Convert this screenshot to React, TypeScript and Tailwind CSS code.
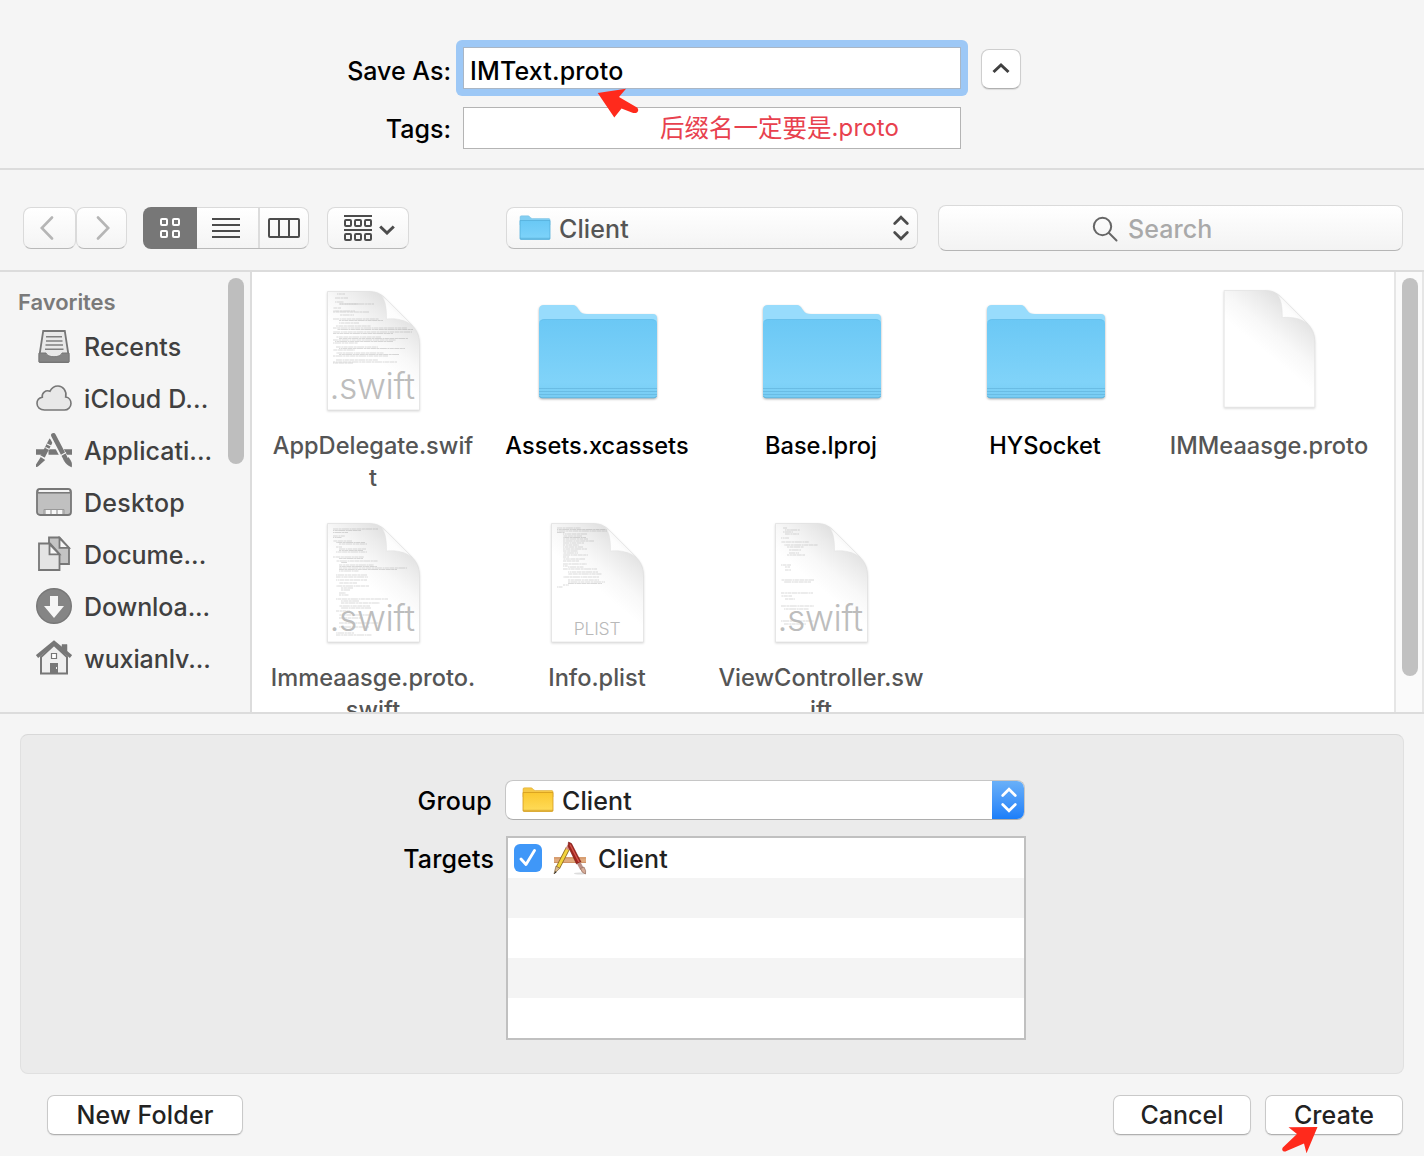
import type { ReactNode } from "react";

type Line = [number, number, number];

const appDelegateLines: Line[] = [
  [8, 7, 13], [10, 3, 8], [8, 11, 9], [12, 13, 19], [13, 13, 34], [6, 17, 8], [6, 20, 22], [6, 21, 36], [13, 24, 14],
  [6, 28, 46], [12, 29.5, 44], [12, 32, 20], [9, 35, 35], [6, 37, 74], [10, 38.5, 76], [6, 41, 79], [6, 42.5, 60],
  [9, 46, 45], [12, 47.5, 69], [6, 49, 63], [8, 50.5, 58], [6, 52, 25], [9, 56, 42], [12, 57.5, 66], [6, 59, 22],
  [9, 62, 48], [12, 63.5, 60], [6, 65, 55], [9, 69, 42], [6, 71, 64], [6, 72, 20],
];
const protoSwiftLines: Line[] = [
  [6, 6, 45], [6, 7.5, 28], [6, 9.5, 15], [6, 13, 12], [6, 14.5, 9], [6, 18, 19], [9, 19.5, 29], [12, 21, 28],
  [9, 24, 6], [12, 26, 27], [12, 27.5, 24], [9, 29, 31], [6, 34, 31], [12, 35.5, 24], [9, 38, 42], [14, 39.5, 6],
  [12, 42, 35], [12, 43.5, 38], [12, 45, 68], [12, 46.5, 58], [12, 48, 20], [9, 52, 31], [9, 54, 32], [9, 57, 31],
  [12, 60, 18], [9, 63, 33], [14, 65, 12], [14, 67, 9], [12, 70, 7], [12, 72, 10], [9, 76, 52], [14, 78, 18],
  [14, 80, 39], [12, 83, 31], [14, 85, 30], [9, 88, 14], [12, 92, 34], [12, 95, 24], [12, 100, 40], [12, 104, 30],
  [9, 110, 18], [9, 112, 36],
];
const plistLines: Line[] = [
  [6, 5, 24], [6, 6.5, 51], [6, 8, 50], [6, 9.5, 8], [12, 11, 24], [12, 13, 19], [12, 14.5, 23], [12, 16, 25],
  [12, 18, 31], [12, 20, 21], [12, 22, 16], [12, 24, 20], [12, 26, 24], [12, 28, 15], [12, 30, 15], [12, 32, 25],
  [12, 34, 6], [12, 36, 22], [12, 38, 16], [12, 41, 24], [12, 43, 5], [17, 44, 16], [12, 46, 34], [17, 49, 30],
  [17, 51, 34], [12, 54, 36], [17, 57, 31], [17, 59, 37], [17, 60.5, 34], [12, 62, 6], [6, 64, 6],
];
const viewLines: Line[] = [
  [8, 5, 4], [10, 7, 15], [8, 9, 10], [10, 11, 14], [6, 15, 8], [6, 19, 28], [9, 22, 34], [12, 24, 17], [14, 27, 12],
  [14, 30, 10], [12, 32, 18], [6, 42, 10], [10, 44, 5], [10, 47, 6], [6, 57, 33], [9, 59, 27], [6, 70, 32],
  [6, 73, 11], [10, 76, 10], [6, 83, 33], [9, 86, 25], [6, 98, 33], [9, 101, 22],
];

function Doc({ lines = [], id, tag, small }: { lines?: Line[]; id: string; tag?: string; small?: boolean }) {
  return (
    <div className="relative h-[120px] w-[93px]">
      <svg viewBox="0 0 93 120" className="h-[120px] w-[93px] overflow-visible" style={{ filter: "drop-shadow(0 1px 1px rgba(0,0,0,.16))" }}>
        <defs>
          <linearGradient id={`s-${id}`} gradientUnits="userSpaceOnUse" x1="72" y1="14" x2="36" y2="58">
            <stop offset="0" stopColor="#dedede" />
            <stop offset=".3" stopColor="#ebebeb" />
            <stop offset=".65" stopColor="#f8f8f8" />
            <stop offset="1" stopColor="#fff" />
          </linearGradient>
          <linearGradient id={`f-${id}`} x1="0" y1="1" x2=".7" y2=".3">
            <stop offset="0" stopColor="#fff" />
            <stop offset=".6" stopColor="#fdfdfd" />
            <stop offset="1" stopColor="#ececec" />
          </linearGradient>
        </defs>
        <path d="M.5.5H42C51 .5 55 4 60 9L83 32C89 38 92.500 43 92.500 54V119H.5Z" fill={`url(#s-${id})`} stroke="#e0e0e0" strokeWidth=".7" />
        <g stroke="#777" strokeWidth=".7" opacity=".38">
          {lines.map(([x, y, w], i) => (
            <line key={i} x1={x} x2={x + w} y1={y} y2={y} strokeDasharray="5 .5 3 .4 7 .6 2 .4 4 .5" strokeDashoffset={i * 3.7} />
          ))}
        </g>
        <path d="M54 4C59 10 59.500 18 59.500 28C70 27 78 29 85 34L60 9Z" fill={`url(#f-${id})`} stroke="#e0e0e0" strokeWidth=".5" />
      </svg>
      {tag && !small && (
        <span className="absolute top-[76px] left-[3px] text-[35.500px] leading-[40px] font-[350] tracking-[-0.4px] text-[#bdbdbd]">{tag}</span>
      )}
      {tag && small && (
        <span className="absolute top-[95px] left-0 w-full text-center text-[17.500px] leading-[22px] font-[350] tracking-[-0.2px] text-[#b9b9b9]">{tag}</span>
      )}
    </div>
  );
}

function BigFolder({ id }: { id: string }) {
  return (
    <svg viewBox="0 0 120 96" className="mt-[13px] ml-[2px] h-[96px] w-[120px] overflow-visible" style={{ filter: "drop-shadow(0 1px 1px rgba(0,0,0,.3))" }}>
      <defs>
        <linearGradient id={id} x1="0" y1="0" x2="0" y2="1">
          <stop offset="0" stopColor="#6bc8f5" />
          <stop offset=".8" stopColor="#80d3f9" />
          <stop offset="1" stopColor="#77ccf3" />
        </linearGradient>
      </defs>
      <path d="M1 6Q1 1 6 1H34C38 1 39 3 41 6C43 9 45 10 49 10H115Q119 10 119 14V60H1Z" fill="#98dcfc" />
      <path d="M1 20Q1 15.500 6 15.500H114Q119 15.500 119 20V91Q119 94 116 94H4Q1 94 1 91Z" fill={`url(#${id})`} />
      <path d="M2 17.500Q3 15.500 6 15.500H114Q117 15.500 118 17.500" fill="none" stroke="#62bce9" strokeWidth=".8" />
      <path d="M1 84.500H119M1 87.500H119M1 90.500H119" stroke="#68bae2" strokeWidth=".9" />
      <path d="M1.500 92Q2 93.800 4 93.800H116Q118 93.800 118.500 92" fill="none" stroke="#5db0d8" strokeWidth=".9" />
    </svg>
  );
}

function SmallFolder({ yellow }: { yellow?: boolean }) {
  const id = yellow ? "yf" : "bf";
  return (
    <svg viewBox="0 0 32 26" className="h-[26px] w-[32px] shrink-0">
      <defs>
        <linearGradient id={id} x1="0" y1="0" x2="0" y2="1">
          <stop offset="0" stopColor={yellow ? "#fbc82f" : "#69c8f5"} />
          <stop offset="1" stopColor={yellow ? "#ffdc5a" : "#7ed3fa"} />
        </linearGradient>
      </defs>
      <path d="M1 2Q1 .8 2.500 .8H9C11 .8 11 3.500 13.500 3.500H30Q31 3.500 31 5V10H1Z" fill={yellow ? "#f6c846" : "#82cef2"} stroke={yellow ? "#dba526" : "#7cc0e0"} strokeWidth=".5" />
      <path d="M1 5.500H31V23.500Q31 24.500 30 24.500H2Q1 24.500 1 23.500Z" fill={`url(#${id})`} stroke={yellow ? "#d39a1c" : "#54afda"} strokeWidth=".8" />
      <path d="M1 23.300H31" stroke={yellow ? "#c8921c" : "#4fa9d3"} strokeWidth=".7" />
    </svg>
  );
}

function UpDown({ className }: { className: string }) {
  return (
    <svg viewBox="0 0 16 26" className={className} fill="none" stroke="currentColor" strokeWidth="2.700" strokeLinecap="round" strokeLinejoin="miter">
      <path d="M1.700 8.500 8 2.200 14.300 8.500M1.700 17.500 8 23.800 14.300 17.500" />
    </svg>
  );
}

const icons: Record<string, ReactNode> = {
  recents: (
    <>
      <path d="M7.200 3H28.800L32.500 27V33.500Q32.500 34 32 34H4Q3.500 34 3.500 33.500V27Z" fill="#e9e9e9" stroke="#777" strokeWidth="1.800" />
      <path d="M10 8.700H26M10 13H26.500M9.500 17H27M9 21.200H27.500" stroke="#808080" strokeWidth="1.500" />
      <path d="M3 25H10C11 30 25 30 26 25H33V34H3Z" fill="#858585" stroke="#777" strokeWidth="1" />
    </>
  ),
  cloud: <path d="M8.500 30C4 30 1 27 1 23.500C1 20 3.500 17.800 6.300 17.300C5.500 13 9.500 9.600 14 11.200C15.500 8 18.500 6 22 6C27 6 31 11 29.700 17C33 17.500 35 20.500 35 23.500C35 27 32 30 28.500 30Z" fill="#e8e8e8" stroke="#777" strokeWidth="1.600" />,
  apps: (
    <g stroke="#777" strokeLinecap="butt">
      <path d="M0 20H8M12.500 20H24M28 20H36" strokeWidth="5.500" />
      <path d="M15.500 7.500 6.500 25" strokeWidth="4.600" />
      <path d="M17 4.500 29 27" stroke="#f5f5f5" strokeWidth="7" />
      <path d="M17.500 3.500 29 25.500" strokeWidth="4.800" strokeLinecap="round" />
      <path d="M11 12 15 14M9.500 15.500 13.500 17.500M4.500 24 9 26.500M24 24 30 20.500" stroke="#f5f5f5" strokeWidth="1.200" />
      <path d="M5 26 8 28 1.500 34Q0 35 .5 33Z" fill="#777" strokeWidth="1.500" />
      <path d="M27.500 27.500 32.500 25.500Q37 31 35.500 35Q30 33 27.500 27.500Z" fill="#777" strokeWidth=".5" />
    </g>
  ),
  desktop: (
    <>
      <rect x="1" y="5" width="34" height="26" rx="3" fill="#c0c0c0" stroke="#777" strokeWidth="1.800" />
      <path d="M2 8.800H34" stroke="#777" strokeWidth="1.500" />
      <path d="M3 7H33" stroke="#f4f4f4" strokeWidth="2" />
      <path d="M8 30V25.500H28V30" fill="none" stroke="#999" />
      <path d="M10 28H14M16 28H20M22 28H26" stroke="#f7f7f7" strokeWidth="4" />
    </>
  ),
  docs: (
    <g stroke="#777" strokeWidth="1.800">
      <path d="M13 1.500H23.500L33 12V28H13Z" fill="#c4c4c4" />
      <path d="M23.500 2V11.800H33Z" fill="#f7f7f7" />
      <path d="M3 7.500H14L23.500 18V34H3Z" fill="#e4e4e4" />
      <path d="M13.500 8V18.300H23.500Z" fill="#f7f7f7" />
    </g>
  ),
  down: (
    <>
      <circle cx="18" cy="18" r="17.300" fill="#858585" stroke="#777" strokeWidth="1.400" />
      <path d="M14 8H22V18H28L18 30 8 18H14Z" fill="#f6f6f6" />
    </>
  ),
  home: (
    <>
      <path d="M26 12V4.500H31V15" fill="#777" stroke="#777" strokeWidth=".5" />
      <path d="M5 17 18 5 31 17V33.500H5Z" fill="#efefef" stroke="#777" strokeWidth="2" />
      <path d="M1 16.500 18 2.500 35 16.500" fill="none" stroke="#777" strokeWidth="3.600" />
      <path d="M15.500 13.500H20.500V18.500H15.500Z" fill="#fff" stroke="#777" strokeWidth="1.200" />
      <path d="M14 23H22V34H14Z" fill="#777" />
      <path d="M20.500 27V29" stroke="#eee" strokeWidth="1" />
    </>
  ),
};

const favorites: [string, string, string][] = [
  ["recents", "Recents", "tracking-[0.12px]"],
  ["cloud", "iCloud D...", "tracking-[0.15px]"],
  ["apps", "Applicati...", "tracking-[0.05px]"],
  ["desktop", "Desktop", "tracking-[0.3px]"],
  ["docs", "Docume...", "tracking-[0px]"],
  ["down", "Downloa...", "tracking-[-0.1px]"],
  ["home", "wuxianlv...", "tracking-[-0.1px]"],
];

const files: { name: ReactNode; icon: ReactNode; active?: boolean }[] = [
  { name: <>AppDelegate.swif<br />t</>, icon: <Doc id="a" lines={appDelegateLines} tag=".swift" /> },
  { name: "Assets.xcassets", icon: <BigFolder id="fa" />, active: true },
  { name: "Base.lproj", icon: <BigFolder id="fb" />, active: true },
  { name: "HYSocket", icon: <BigFolder id="fc" />, active: true },
  { name: "IMMeaasge.proto", icon: <div className="-mt-px origin-top scale-[0.985] pl-px"><Doc id="b" /></div> },
  { name: <>Immeaasge.proto.<br />swift</>, icon: <Doc id="c" lines={protoSwiftLines} tag=".swift" /> },
  { name: "Info.plist", icon: <Doc id="d" lines={plistLines} tag="PLIST" small /> },
  { name: <>ViewController.sw<br />ift</>, icon: <Doc id="e" lines={viewLines} tag=".swift" /> },
];

const toolButton =
  "flex h-[42px] items-center border border-[#dadada] border-b-[#b9b9b9] bg-linear-to-b from-white to-[#f4f4f4]";
const pushButton =
  "flex h-[40px] items-center justify-center rounded-[7px] border border-[#c9c9c9] border-b-[#b0b0b0] bg-white text-[#222] shadow-[0_1px_1px_rgba(0,0,0,0.08)]";

export default function App() {
  return (
    <div className="relative flex h-[1156px] w-[1424px] flex-col overflow-hidden bg-[#f5f5f5] font-['Inter','Noto_Sans_CJK_SC',sans-serif] text-[25px] leading-[32px] font-[450] text-black">
      <header className="h-[170px] shrink-0 border-b-2 border-[#dcdcdc] pt-[47px]">
        <div className="flex h-[42px] items-center">
          <label className="w-[451px] pt-[6px] text-right">Save As:</label>
          <div className="ml-[5px] -my-[7px] rounded-[6px] bg-[#9dc8f6] p-[7px]">
            <div className="flex h-[42px] w-[498px] items-center border border-[#a9b6c5] bg-white pt-[6px] pl-[6px] tracking-[0.15px]">
              IMText.proto
            </div>
          </div>
          <button className="mt-[2px] ml-[13px] flex h-[40px] w-[40px] items-center justify-center rounded-[8px] border border-[#cecece] border-b-[#b0b0b0] bg-white shadow-[0_1px_1px_rgba(0,0,0,0.1)]">
            <svg viewBox="0 0 18 12" className="mb-[3px] h-[12px] w-[18px]" fill="none" stroke="#404040" strokeWidth="3">
              <path d="M1.500 10 9 3 16.500 10" />
            </svg>
          </button>
        </div>
        <div className="mt-[18px] flex h-[42px] items-center">
          <label className="w-[451px] pt-[2px] text-right">Tags:</label>
          <div className="ml-[12px] flex h-[42px] w-[498px] items-center border border-[#b4b4b4] bg-white pl-[196px] text-[24px] font-normal text-[#e8414e]">
            <span className="text-[24.500px]">后缀名一定要是</span>
            <span className="tracking-[0.15px]">.proto</span>
          </div>
        </div>
      </header>

      <div className="flex h-[102px] shrink-0 items-start border-b-2 border-[#dcdcdc] pt-[37px] pl-[23px] text-[#555]">
        <button className={`${toolButton} w-[53px] justify-center rounded-[8px]`}>
          <svg viewBox="0 0 14 24" className="mr-[5px] h-[24px] w-[14px]" fill="none" stroke="#b5b5b5" strokeWidth="2.600" strokeLinecap="round">
            <path d="M12 1.500 1.800 12 12 22.500" />
          </svg>
        </button>
        <button className={`${toolButton} w-[51px] justify-center rounded-[8px]`}>
          <svg viewBox="0 0 14 24" className="ml-[2px] h-[24px] w-[14px]" fill="none" stroke="#b5b5b5" strokeWidth="2.600" strokeLinecap="round">
            <path d="M2 1.500 12.200 12 2 22.500" />
          </svg>
        </button>
        <div className="ml-[16px] flex h-[42px] w-[166px]">
          <div className="flex h-[42px] w-[54px] shrink-0 items-center justify-center rounded-l-[8px] bg-[#777]">
            <svg viewBox="0 0 20 20" className="h-[20px] w-[20px]" fill="none" stroke="#fff" strokeWidth="2">
              <rect x="1" y="1" width="6" height="6" rx="1" />
              <rect x="13" y="1" width="6" height="6" rx="1" />
              <rect x="1" y="13" width="6" height="6" rx="1" />
              <rect x="13" y="13" width="6" height="6" rx="1" />
            </svg>
          </div>
          <div className={`${toolButton} w-[112px] rounded-r-[8px] border-l-0`}>
            <div className="flex h-full w-[63px] shrink-0 items-center border-r-2 border-[#dcdcdc] pl-[15px]">
              <svg viewBox="0 0 28 20" className="h-[20px] w-[28px]" stroke="#4c4c4c" strokeWidth="2">
                <path d="M0 1H28M0 7H28M0 13H28M0 19H28" />
              </svg>
            </div>
            <div className="flex h-full flex-1 items-center justify-center">
              <svg viewBox="0 0 32 20" className="h-[20px] w-[32px]" fill="none" stroke="#4c4c4c" strokeWidth="2">
                <rect x="1" y="1" width="30" height="18" rx="1" />
                <path d="M11 1V19M21 1V19" />
              </svg>
            </div>
          </div>
        </div>
        <button className={`${toolButton} ml-[18px] w-[82px] rounded-[8px] pl-[16px]`}>
          <svg viewBox="0 0 28 26" className="h-[26px] w-[28px]" fill="none" stroke="#4c4c4c" strokeWidth="2">
            <path d="M0 1H28M0 15H28" />
            {[1, 11, 21].map((x) => (
              <g key={x}>
                <rect x={x} y="5" width="6" height="6" rx="1" />
                <rect x={x} y="19" width="6" height="6" rx="1" />
              </g>
            ))}
          </svg>
          <svg viewBox="0 0 16 10" className="mt-[3px] ml-[7px] h-[10px] w-[16px]" fill="none" stroke="#4c4c4c" strokeWidth="3">
            <path d="M1.200 1.500 8 8 14.800 1.500" />
          </svg>
        </button>
        <div className={`${toolButton} ml-[97px] w-[412px] rounded-[8px] pr-[8px] pl-[12px]`}>
          <SmallFolder />
          <span className="ml-[8px] flex-1 pt-[2px] tracking-[0.1px]">Client</span>
          <UpDown className="h-[26px] w-[16px] text-[#4c4c4c]" />
        </div>
        <div className="-mt-[2px] ml-[20px] flex h-[46px] w-[465px] items-center rounded-[8px] border border-[#dadada] border-b-[#b5b5b5] bg-linear-to-b from-white to-[#f3f3f3] pl-[153px] text-[#a9a9a9]">
          <svg viewBox="0 0 26 26" className="mt-[2px] h-[26px] w-[26px]" fill="none" stroke="#666" strokeWidth="2" strokeLinecap="round">
            <circle cx="10.500" cy="10.500" r="8.700" />
            <path d="M17 17 24.500 24.500" />
          </svg>
          <span className="ml-[10px] pt-px tracking-[0.05px]">Search</span>
        </div>
      </div>

      <main className="flex h-[442px] shrink-0 overflow-hidden border-b-2 border-[#dcdcdc]">
        <aside className="flex w-[252px] shrink-0 border-r-2 border-[#dcdcdc]">
          <div className="w-[228px] pt-[14px]">
            <h2 className="pl-[18px] text-[22px] leading-[32px] font-semibold tracking-[-0.05px] text-[#7a7a7a]">Favorites</h2>
            <ul className="mt-[3px] text-[#404040]">
              {favorites.map(([icon, name, track]) => (
                <li key={name} className="flex h-[52px] items-center pl-[36px]">
                  <svg viewBox="0 0 36 36" className="mb-[2px] h-[36px] w-[36px] shrink-0" fill="none">
                    {icons[icon]}
                  </svg>
                  <span className={`ml-[12px] whitespace-nowrap ${track}`}>{name}</span>
                </li>
              ))}
            </ul>
          </div>
          <div className="mt-[6px] h-[186px] w-[16px] rounded-full bg-[#bebebe]" />
        </aside>
        <div className="grid w-[1142px] shrink-0 auto-rows-[232px] grid-cols-[repeat(5,224px)] bg-white pl-[9px]">
          {files.map((f, i) => (
            <div key={i} className="flex flex-col items-center pt-[19px]">
              <div className="h-[139px]">{f.icon}</div>
              <p className={`text-center text-[23.600px] leading-[32px] whitespace-nowrap ${f.active ? "text-black" : "text-[#555]"}`}>{f.name}</p>
            </div>
          ))}
        </div>
        <div className="flex-1 border-r-2 border-l-2 border-[#e6e6e6] bg-[#fafafa] pt-[6px] pl-[6px]">
          <div className="h-[398px] w-[16px] rounded-full bg-[#c1c1c1]" />
        </div>
      </main>

      <section className="mx-[20px] mt-[20px] h-[340px] shrink-0 rounded-[8px] border border-[#e0e0e0] border-t-[#d8d8d8] bg-[#ebebeb] pt-[45px]">
        <div className="flex h-[41px] items-start">
          <label className="w-[471px] pt-[5px] text-right tracking-[0.2px]">Group</label>
          <div className="ml-[13px] flex h-[40px] w-[520px] items-center overflow-hidden rounded-[8px] border border-[#c6c6c6] border-b-[#adadad] bg-white pl-[16px] text-[#222]">
            <SmallFolder yellow />
            <span className="ml-[8px] flex-1 pt-[2px] tracking-[0.1px]">Client</span>
            <div className="-my-px -mr-px flex h-[40px] w-[33px] items-center justify-center bg-linear-to-b from-[#6bb1f8] to-[#177df9]">
              <UpDown className="h-[26px] w-[16px] text-white" />
            </div>
          </div>
        </div>
        <div className="mt-[15px] flex items-start">
          <label className="w-[473px] pt-[7px] text-right tracking-[0.15px]">Targets</label>
          <div className="ml-[12px] w-[520px] border-2 border-[#c0c0c0] bg-white text-[#222]">
            <div className="flex h-[40px] items-center pl-[6px]">
              <div className="flex h-[28px] w-[28px] items-center justify-center rounded-[6px] bg-[#3f97f8]">
                <svg viewBox="0 0 18 18" className="h-[18px] w-[18px]" fill="none" stroke="#fff" strokeWidth="2.800" strokeLinecap="round" strokeLinejoin="round">
                  <path d="M2 10 7 15.500 15.500 1.500" />
                </svg>
              </div>
              <svg viewBox="0 0 34 34" className="ml-[11px] h-[34px] w-[34px]" fill="none">
                <path d="M1 19H33" stroke="#e0aa7e" strokeWidth="6" />
                <path d="M1 17H33M1 21.500H33" stroke="#cf9265" strokeWidth="1" />
                <ellipse cx="27" cy="32.500" rx="6" ry="1" fill="#ddd" />
                <path d="M15 7 5 26.500" stroke="#8d6a22" strokeWidth="4.600" />
                <path d="M14.500 8 5 26.500" stroke="#f3d43c" strokeWidth="2.800" />
                <path d="M16 5 14.300 8.500" stroke="#d98f83" strokeWidth="4" />
                <path d="M3 25 6.800 27.300 1 33Z" fill="#d8b98a" stroke="#70502a" strokeWidth=".6" />
                <path d="M2.500 30 1 33 3.500 31.500Z" fill="#333" />
                <path d="M15.500 1 18.500 2.500 28 21 23.500 23 15 5Z" fill="#9c241d" stroke="#7c1713" strokeWidth=".6" />
                <path d="M17 3.500 26 21" stroke="#d4574e" strokeWidth="1.400" />
                <path d="M25.800 22 29 28" stroke="#b98f86" strokeWidth="3.800" />
                <path d="M27.500 27.500 31 26Q33.500 30 32.500 33Q28.500 32 27.500 27.500Z" fill="#d6ac98" stroke="#8a6152" strokeWidth=".6" />
              </svg>
              <span className="ml-[11px] pt-px tracking-[0.1px]">Client</span>
            </div>
            <div className="h-[40px] bg-[#f4f4f4]" />
            <div className="h-[40px]" />
            <div className="h-[40px] bg-[#f4f4f4]" />
            <div className="h-[40px]" />
          </div>
        </div>
      </section>

      <footer className="mt-[21px] flex pr-[21px] pl-[47px]">
        <button className={`${pushButton} w-[196px] tracking-[0.15px]`}>New Folder</button>
        <button className={`${pushButton} ml-auto w-[138px]`}>Cancel</button>
        <button className={`${pushButton} ml-[14px] w-[138px] tracking-[0.1px]`}>Create</button>
      </footer>

      <svg viewBox="0 0 42 30" className="absolute top-[88px] left-[597px] h-[30px] w-[42px]" fill="#ff2a1c">
        <path d="M.7 5 29 .7 22 9 40 19.500Q42.500 22 40 24.500Q38 25.500 35.500 24.700L24.500 20.500 17.300 29.500Z" />
      </svg>
      <svg viewBox="0 0 36 28" className="absolute top-[1126px] left-[1282px] h-[28px] w-[36px]" fill="#ff2a1c">
        <path d="M35.500 1 6.500 1.300 15 8 .8 21.500Q-.5 23.500 1 25Q2.500 26 4.500 25L22 17.500 24.500 27.300Z" />
      </svg>
    </div>
  );
}
